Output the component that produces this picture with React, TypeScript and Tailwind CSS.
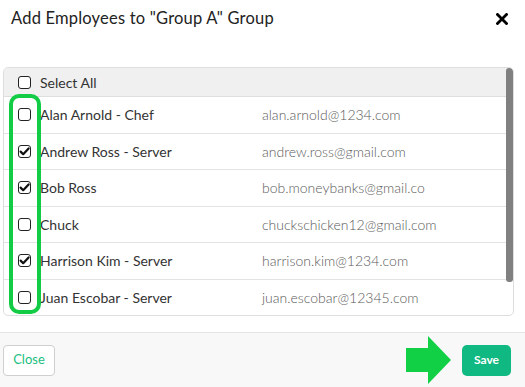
import React from "react";

const rows = [
  { name: "Alan Arnold - Chef", email: "alan.arnold@1234.com", checked: false },
  { name: "Andrew Ross - Server", email: "andrew.ross@gmail.com", checked: true },
  { name: "Bob Ross", email: "bob.moneybanks@gmail.co", checked: true },
  { name: "Chuck", email: "chuckschicken12@gmail.com", checked: false },
  { name: "Harrison Kim - Server", email: "harrison.kim@1234.com", checked: true },
  { name: "Juan Escobar - Server", email: "juan.escobar@12345.com", checked: false },
];

function Box({ checked }: { checked: boolean }) {
  return (
    <div className="relative w-[13px] h-[13px] rounded-[3px] border border-[#222] bg-white shrink-0">
      {checked && (
        <svg viewBox="0 0 13 13" className="absolute -left-[1px] -top-[1px] w-[13px] h-[13px]">
          <path d="M2.6 6.6 L5.2 9.2 L10.6 3.4" fill="none" stroke="#111" strokeWidth="2.2" strokeLinecap="round" strokeLinejoin="round" />
        </svg>
      )}
    </div>
  );
}

export default function App() {
  return (
    <div className="w-[525px] h-[387px] bg-white relative overflow-hidden" style={{ fontFamily: "Lato, 'Open Sans', sans-serif" }}>
      <div className="h-[37px] flex items-center justify-between pl-[11px] pr-[17px]">
        <div className="text-[16.5px] text-[#222] tracking-[0.2px]">Add Employees to "Group A" Group</div>
        <svg viewBox="0 0 12 12" className="w-[12px] h-[12px]">
          <path d="M1.5 1.5 L10.5 10.5 M10.5 1.5 L1.5 10.5" stroke="#000" strokeWidth="2.8" strokeLinecap="square" />
        </svg>
      </div>
      <div className="h-[30px]" />
      <div className="relative ml-[3px] w-[511px] h-[249px] border border-[#dedede] rounded-[5px] overflow-hidden">
        <div className="h-[29px] bg-[#f0f0f0] border-b border-[#dedede] flex items-center pl-[14px] gap-[9px]">
          <Box checked={false} />
          <span className="text-[14px] text-[#333]">Select All</span>
        </div>
        {rows.map((r, i) => (
          <div key={i} className="h-[36.5px] border-b border-[#e3e3e3] flex items-center text-[14px]">
            <div className="pl-[14px] w-[258px] flex items-center gap-[9px]">
              <Box checked={r.checked} />
              <span className="text-[#333]">{r.name}</span>
            </div>
            <span className="text-[#5a5a5a] font-light">{r.email}</span>
          </div>
        ))}
        <div className="absolute right-0 top-0 w-[7px] h-[214px] bg-[#808080] rounded-[3px]" />
      </div>
      <div className="absolute left-[9px] top-[94px] w-[32px] h-[220px] border-4 border-[#13cc46] rounded-[10px]" />
      <div className="absolute left-0 right-0 top-[332px] bottom-0 bg-[#f8f8f8] border-t border-[#e3e3e3] flex items-center justify-between pl-[3px] pr-[14px]">
        <button className="w-[52px] h-[31px] bg-white border border-[#cfcfcf] rounded-[4px] text-[13px] text-[#20c080]">Close</button>
        <div className="flex items-center gap-[11px]">
          <svg viewBox="0 0 45 48" className="w-[45px] h-[48px]">
            <polygon points="0,12 22,12 22,0 45,24 22,48 22,36 0,36" fill="#12d046" />
          </svg>
          <button className="w-[49px] h-[31px] bg-[#10b981] rounded-[5px] text-[12px] font-bold text-white">Save</button>
        </div>
      </div>
    </div>
  );
}
